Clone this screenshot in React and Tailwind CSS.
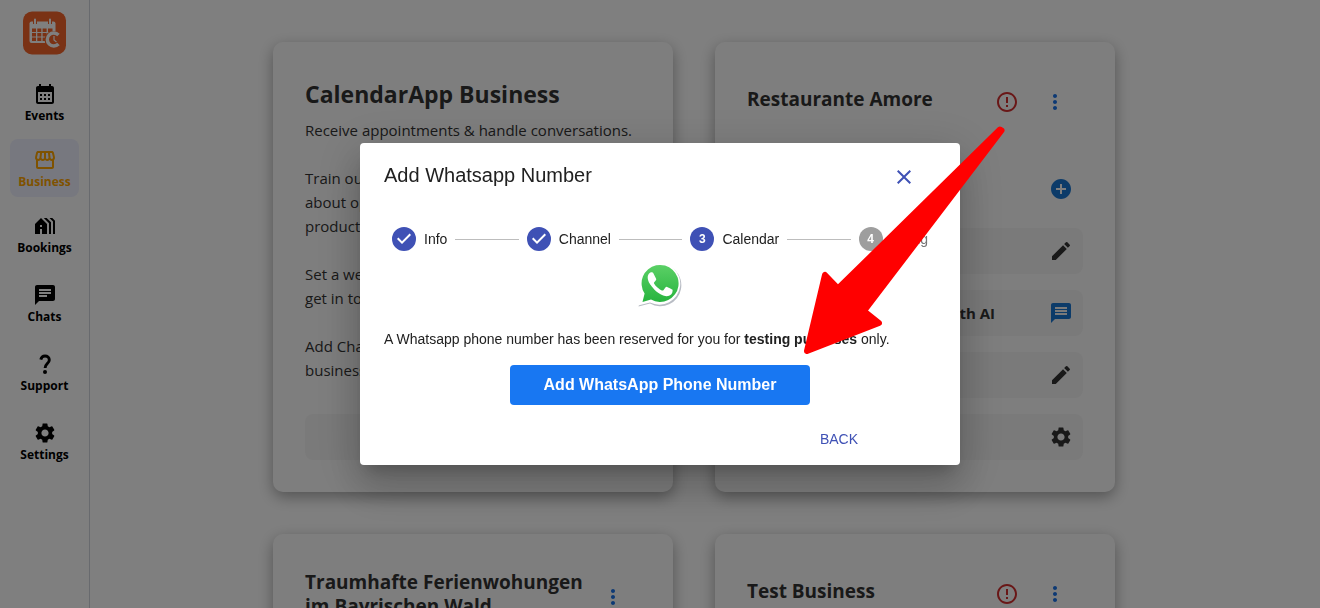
import {
  MdAddCircle,
  MdClose,
  MdErrorOutline,
  MdHolidayVillage,
  MdMoreVert,
  MdSettings,
  MdStorefront,
} from "react-icons/md";

const NAV = [
  { label: "Events", icon: CalendarIcon, gap: "" },
  { label: "Business", icon: MdStorefront, gap: "mt-2", active: true },
  { label: "Bookings", icon: MdHolidayVillage, gap: "mt-2" },
  { label: "Chats", icon: ChatIcon, gap: "mt-[11px]" },
  { label: "Support", icon: QuestionIcon, gap: "mt-[11px]" },
  { label: "Settings", icon: MdSettings, gap: "mt-[11px]" },
];

const ROWS = [
  { label: "Channels", icon: MdAddCircle, box: "", color: "text-[#1976d2]" },
  { label: "Business info", icon: EditIcon, box: "bg-[#f5f5f5]", color: "text-[#333]" },
  { label: "Test your conversations with AI", icon: MessageIcon, box: "bg-[#f5f5f5]", color: "text-[#1976d2]" },
  { label: "Calendar", icon: EditIcon, box: "bg-[#f5f5f5]", color: "text-[#333]" },
  { label: "Settings", icon: MdSettings, box: "bg-[#f5f5f5]", color: "text-[#333]" },
];

const STEPS = [
  { label: "Info", state: "done" },
  { label: "Channel", state: "done" },
  { label: "Calendar", state: "current" },
  { label: "Billing", state: "todo" },
];

export default function App() {
  return (
    <div className="relative flex h-screen overflow-hidden bg-white font-['Open_Sans','Noto_Sans',sans-serif] text-[#333]">
      <Sidebar />
      <main className="min-w-0 flex-1 pt-[42px] pr-[22px]">
        <div className="flex flex-wrap justify-center gap-[42px]">
          <IntroCard />
          <BusinessCard title="Restaurante Amore" alert rows={ROWS} />
          <BusinessCard title="Traumhafte Ferienwohungen im Bayrischen Wald" rows={ROWS} />
          <BusinessCard title="Test Business" alert rows={ROWS} />
        </div>
      </main>
      <div className="fixed inset-0 flex items-center justify-center bg-black/50">
        <NumberDialog />
      </div>
    </div>
  );
}

function Sidebar() {
  return (
    <aside className="flex w-[90px] shrink-0 flex-col items-center border-r border-gray-300 pt-[11px]">
      <Logo />
      <nav className="mt-[18px] flex flex-col items-center">
        {NAV.map(({ label, icon: Icon, gap, active }) => (
          <a
            key={label}
            href="#"
            className={`flex h-[58px] w-[69px] flex-col items-center gap-[2px] rounded-lg pt-[9px] text-xs font-bold ${gap} ${active ? "bg-[#eef0ff] text-[#ffa500]" : "text-black"}`}
          >
            <Icon className="size-6" />
            <span>{label}</span>
          </a>
        ))}
      </nav>
    </aside>
  );
}

function Card({ children }) {
  return (
    <section className="flex h-[450px] w-[400px] flex-col rounded-[10px] bg-[#fdfdfd] px-8 pt-9 pb-8 shadow-[0_5px_15px_rgba(0,0,0,0.35)]">
      {children}
    </section>
  );
}

function IntroCard() {
  return (
    <Card>
      <h1 className="text-[23px] leading-8 font-bold">CalendarApp Business</h1>
      <div className="mt-2 flex flex-col gap-6 text-[15px] leading-6 whitespace-nowrap">
        <p>Receive appointments &amp; handle conversations.</p>
        <p>
          Train our AI with everything it needs
          <br />
          about opening hours, services and
          <br />
          products.
        </p>
        <p>
          Set a website link for customers to
          <br />
          get in touch with you.
        </p>
        <p>
          Add Channels and connect your
          <br />
          business calendar.
        </p>
      </div>
      <button className="mt-auto h-[46px] shrink-0 rounded-lg bg-[#f5f5f5] font-bold">Add Business</button>
    </Card>
  );
}

function BusinessCard({ title, alert, rows }) {
  return (
    <Card>
      <div className="flex min-h-12 items-center pr-1">
        <h2 className="flex-1 pb-[6px] text-[19px] leading-6 font-bold">{title}</h2>
        {alert && (
          <button aria-label="Show problem" className="flex size-12 items-center justify-center text-[#d32f2f]">
            <MdErrorOutline className="size-6" />
          </button>
        )}
        <button aria-label="More options" className="flex size-12 items-center justify-center text-[#1a73e8]">
          <MdMoreVert className="size-6" />
        </button>
      </div>
      <ul className="mt-auto flex flex-col gap-4">
        {rows.map(({ label, icon: Icon, box, color }) => (
          <li key={label} className={`flex h-[46px] items-center justify-between rounded-lg pr-[10px] pl-3 ${box}`}>
            <span className="text-[15px] font-bold">{label}</span>
            <button aria-label={label} className={color}>
              <Icon className="size-6" />
            </button>
          </li>
        ))}
      </ul>
    </Card>
  );
}

function NumberDialog() {
  return (
    <div
      role="dialog"
      aria-label="Add Whatsapp Number"
      className="relative w-[600px] rounded bg-white pt-[10px] pb-2 font-['Liberation_Sans',Arial,sans-serif] text-sm text-[#212121] shadow-[0_11px_15px_-7px_rgba(0,0,0,0.2),0_24px_38px_3px_rgba(0,0,0,0.14),0_9px_46px_8px_rgba(0,0,0,0.12)]"
    >
      <header className="flex items-center justify-between pr-8 pl-6">
        <h2 className="pb-1 text-xl">Add Whatsapp Number</h2>
        <button aria-label="Close" className="flex size-12 items-center justify-center text-[#3f51b5]">
          <MdClose className="size-6" />
        </button>
      </header>

      <ol className="mt-[26px] flex items-center gap-2 px-8">
        {STEPS.map((step, i) => (
          <Step key={step.label} number={i + 1} {...step} />
        ))}
      </ol>

      <div className="mt-3 flex flex-col items-center">
        <WhatsappLogo />
      </div>
      <p className="mt-[22px] px-6 leading-5">
        A Whatsapp phone number has been reserved for you for <b>testing purposes</b> only.
      </p>
      <div className="mt-4 flex justify-center">
        <button className="h-10 w-[300px] rounded bg-[#1877f2] text-base font-bold text-white">
          Add WhatsApp Phone Number
        </button>
      </div>
      <div className="mt-4 flex justify-end pr-[94px]">
        <button className="h-9 px-2 text-[#3f51b5]">BACK</button>
      </div>
      <Arrow />
    </div>
  );
}

function Step({ number, label, state }) {
  return (
    <>
      {number > 1 && <li aria-hidden="true" className="h-px flex-1 bg-[#bdbdbd]" />}
      <li className="flex items-center gap-2">
        {state === "done" ? (
          <CheckIcon className="size-6 text-[#3f51b5]" />
        ) : (
          <span
            className={`flex size-6 items-center justify-center rounded-full text-xs font-bold text-white ${state === "current" ? "bg-[#3f51b5]" : "bg-[#9e9e9e]"}`}
          >
            {number}
          </span>
        )}
        <span className={state === "todo" ? "text-[#757575]" : ""}>{label}</span>
      </li>
    </>
  );
}

function CheckIcon({ className }) {
  return (
    <svg className={className} viewBox="0 0 24 24" fill="currentColor" aria-hidden="true">
      <path d="M12 0a12 12 0 1 0 0 24 12 12 0 0 0 0-24zm-2 17l-5-5 1.400-1.400 3.600 3.600 7.600-7.600L19 8l-9 9z" />
    </svg>
  );
}

function CalendarIcon({ className }) {
  return (
    <svg className={className} viewBox="0 0 24 24" fill="currentColor" aria-hidden="true">
      <path
        fillRule="evenodd"
        d="M19 4h-1V2h-2v2H8V2H6v2H5c-1.100 0-2 .9-2 2v14c0 1.100.9 2 2 2h14c1.100 0 2-.9 2-2V6c0-1.100-.9-2-2-2zM5 10h14v10H5z"
      />
      <path d="M7 12h2v2H7zM11 12h2v2h-2zM15 12h2v2h-2zM7 16h2v2H7zM11 16h2v2h-2zM15 16h2v2h-2z" />
    </svg>
  );
}

function ChatIcon({ className }) {
  return (
    <svg className={className} viewBox="0 0 24 24" fill="currentColor" aria-hidden="true">
      <path d="M20 2H4c-1.100 0-2 .9-2 2v18l4-4h14c1.100 0 2-.9 2-2V4c0-1.100-.9-2-2-2zM6 9h12v2H6V9zm8 5H6v-2h8v2zm4-6H6V6h12v2z" />
    </svg>
  );
}

function MessageIcon({ className }) {
  return (
    <svg className={className} viewBox="0 0 24 24" fill="currentColor" aria-hidden="true">
      <path d="M20 2H4c-1.100 0-2 .9-2 2v18l4-4h14c1.100 0 2-.9 2-2V4c0-1.100-.9-2-2-2zm-2 12H6v-2h12v2zm0-3H6V9h12v2zm0-3H6V6h12v2z" />
    </svg>
  );
}

function EditIcon({ className }) {
  return (
    <svg className={className} viewBox="0 0 24 24" fill="currentColor" aria-hidden="true">
      <path d="M3 17.250V21h3.750L17.810 9.940l-3.750-3.750L3 17.250zM20.710 7.040a1 1 0 0 0 0-1.410l-2.340-2.340a1 1 0 0 0-1.410 0l-1.830 1.830 3.750 3.750 1.830-1.830z" />
    </svg>
  );
}

function QuestionIcon({ className }) {
  return (
    <svg className={className} viewBox="0 0 24 24" aria-hidden="true">
      <path
        d="M7.800 7.600C8.300 5.300 9.900 4 12 4c2.500 0 4.300 1.600 4.300 3.900 0 3.500-4.200 3.800-4.200 8"
        fill="none"
        stroke="currentColor"
        strokeWidth="2.900"
      />
      <circle cx="12" cy="20" r="2" fill="currentColor" />
    </svg>
  );
}

function Arrow() {
  return (
    <svg
      className="pointer-events-none absolute -top-[22px] left-[440px] h-[240px] w-[210px]"
      viewBox="800 121 210 240"
      fill="red"
      stroke="red"
      strokeWidth="6"
      strokeLinejoin="round"
      aria-hidden="true"
    >
      <path d="M1000 129.500 L838 288.500 L825 275 L807 351 L879 323 L864 311 L1001.500 130.500 Z" />
    </svg>
  );
}

function WhatsappLogo() {
  return (
    <svg className="h-[44px] w-[44px]" viewBox="0 0 44 44" aria-hidden="true">
      <defs>
        <linearGradient id="wa" x1="0" y1="0" x2="0" y2="1">
          <stop offset="0" stopColor="#5bd066" />
          <stop offset="1" stopColor="#27b43e" />
        </linearGradient>
      </defs>
      <path d="M.5 43.500 L3.500 31.500 A21 21 0 1 1 12 40.500 Z" fill="#b8bcc4" />
      <path d="M0 42.500 L3 31 A21 21 0 1 1 12 39.500 Z" fill="#fff" />
      <path d="M4.500 39 L6.600 30.500 A18.500 18.500 0 1 1 13 36.500 Z" fill="url(#wa)" />
      <path
        d="M15.500 10.500c-.6-1.200-1.200-1.200-2-1.200-1.300 0-3.800 1.800-3.800 5.200 0 3.500 2.500 7 3 7.500.4.500 5 7.900 12.500 10.500 6 2.300 8.700-1.500 9.100-3 .4-1.400.4-2.500.2-2.800-.2-.4-5-2.800-5.600-2.800-.6-.1-1 0-1.500.7l-2 2.600c-.4.500-.9.500-1.600.2-5.200-2.600-7.200-6-7.700-6.900-.4-.8 0-1.200.4-1.600l1.400-1.700c.5-.7.400-1.100.1-1.800z"
        fill="#fff"
      />
    </svg>
  );
}

function Logo() {
  return (
    <svg className="h-[44px] w-[44px]" viewBox="0 0 44 44" aria-label="CalendarApp">
      <rect x="0" y="0.500" width="43" height="43" rx="9" fill="#f4642a" />
      <path d="M6.500 12.500a2 2 0 0 1 2-2h22a2 2 0 0 1 2 2V30a2 2 0 0 1-2 2h-22a2 2 0 0 1-2-2z" fill="#fff" />
      <path d="M12 7v6M27 7v6" stroke="#f4642a" strokeWidth="4" />
      <path d="M12 8.500v4M27 8.500v4" stroke="#fff" strokeWidth="2" strokeLinecap="round" />
      <g fill="#f4642a">
        <path d="M9 17.500h4V21H9zM14.300 17.500h4V21h-4zM19.600 17.500h4V21h-4zM25 17.500h4.500V21H25z" />
        <path d="M9 22h4v3.500H9zM14.300 22h4v3.500h-4zM19.600 22h4v3.500h-4z" />
        <path d="M9 26.500h4V30H9zM14.300 26.500h4V30h-4zM19.600 26.500h4V30h-4z" />
        <circle cx="30" cy="28.500" r="8.500" />
      </g>
      <path d="M35.500 24a6.500 6.500 0 1 0 0 9" fill="none" stroke="#fff" strokeWidth="3.400" />
      <path d="M31 25v4l2.500 2" fill="none" stroke="#fff" strokeWidth="1.200" />
    </svg>
  );
}
